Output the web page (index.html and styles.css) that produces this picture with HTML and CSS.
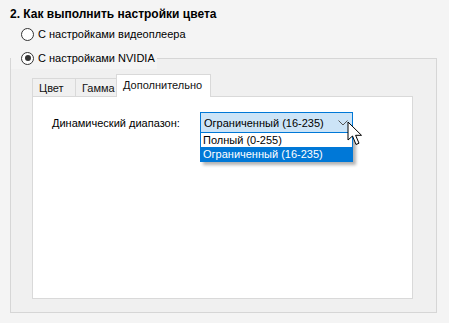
FILE: index.html
```html
<!DOCTYPE html>
<html lang="ru">
<head>
<meta charset="UTF-8" />
<title>Настройки цвета</title>
<link rel="stylesheet" href="styles.css">
</head>
<body>
<main class="page">
  <h2 class="title">2. Как выполнить настройки цвета</h2>

  <label class="radio"><span class="dot"></span>С настройками видеоплеера</label>

  <fieldset class="group">
    <legend><label class="radio"><span class="dot checked"></span>С настройками NVIDIA</label></legend>

    <div class="tabs">
      <span class="tab tab-color">Цвет</span>
      <span class="tab tab-gamma">Гамма</span>
      <span class="tab active">Дополнительно</span>
    </div>

    <div class="panel">
      <div class="row">
        <span class="label">Динамический диапазон:</span>
        <div class="select">
          <div class="select-box">
            <span>Ограниченный (16-235)</span>
            <svg class="chevron" width="10" height="6" viewBox="0 0 10 6"><path d="M0.5 0.5 L5 5 L9.5 0.5" fill="none" stroke="#555" stroke-width="1"/></svg>
          </div>
          <ul class="options">
            <li>Полный (0-255)</li>
            <li class="selected">Ограниченный (16-235)</li>
          </ul>
          <svg class="cursor" width="18" height="26" viewBox="0 0 18 26">
            <path d="M1 1 L1 19 L5.5 15 L9 23.5 L12 22.2 L8.6 14.3 L14.5 14.3 Z" fill="#fff" stroke="#000" stroke-width="1" stroke-linejoin="round"/>
          </svg>
        </div>
      </div>
    </div>
  </fieldset>
</main>
</body>
</html>
```

FILE: styles.css
```css
body {
  margin: 0;
  background: #f4f4f4;
  color: #000;
  font-family: "Liberation Sans", Arial, sans-serif;
  font-size: 11px;
  white-space: nowrap;
}
.page {
  padding: 6px 12px 0 10px;
}
.title {
  margin: 0;
  font-size: 12px;
  font-weight: 700;
  line-height: 17px;
}
/* Radio buttons */
.radio {
  display: flex;
  align-items: center;
  gap: 4px;
  height: 22px;
  padding-left: 11px;
}
.dot {
  width: 11px;
  height: 11px;
  border: 1px solid #333;
  border-radius: 50%;
  background: #fff;
  position: relative;
}
.dot.checked::after {
  content: "";
  position: absolute;
  left: 2.5px; top: 2.5px;
  width: 6px; height: 6px;
  border-radius: 50%;
  background: #333;
}
/* Group box */
.group {
  margin: 2px 0 0 0;
  padding: 0 23px 13px 21px;
  border: 1px solid #d6d6d6;
  background: #f0f0f0;
}
.group legend {
  padding: 0 2px 0 0;
  margin-left: -21px;
  background: #f4f4f4;
}
.group legend .radio {
  padding-left: 10px;
}
/* Tabs */
.tabs {
  display: flex;
  align-items: flex-end;
  margin-top: 5px;
  height: 22px;
}
.tab {
  box-sizing: border-box;
  height: 18px;
  line-height: 18px;
  padding: 0 0 0 6px;
  border: 1px solid #d9d9d9;
  border-bottom: none;
  background: #f0f0f0;
  margin-right: -1px;
  color: #111;
}
.tab-color { width: 44px; }
.tab-gamma { width: 42px; }
.tab.active {
  width: 95px;
  height: 23px;
  line-height: 20px;
  padding-left: 6px;
  background: #fff;
  position: relative;
  z-index: 1;
  margin-bottom: -1px;
}
.panel {
  box-sizing: border-box;
  height: 203px;
  background: #fff;
  border: 1px solid #d9d9d9;
  padding: 15px 0 0 19px;
}
.row {
  display: flex;
  align-items: center;
  gap: 20px;
}
.label {
  width: 128px;
}
/* Combo box */
.select {
  position: relative;
  width: 153px;
}
.select-box {
  box-sizing: border-box;
  display: flex;
  align-items: center;
  justify-content: space-between;
  height: 21px;
  padding: 0 4px 0 3px;
  border: 1px solid #0078d7;
  background: #cce4f7;
}
.options {
  position: absolute;
  left: 0; top: 21px;
  width: 153px;
  margin: 0;
  padding: 0;
  list-style: none;
  background: #fff;
  border: 1px solid #0078d7;
  border-top: none;
  box-sizing: border-box;
  box-shadow: 3px 3px 3px rgba(0,0,0,0.3);
}
.options li {
  height: 14px;
  line-height: 14px;
  padding-left: 2px;
}
.options li.selected {
  background: #0078d7;
  color: #fff;
}
.cursor {
  position: absolute;
  left: 147px;
  top: 9px;
}
```
